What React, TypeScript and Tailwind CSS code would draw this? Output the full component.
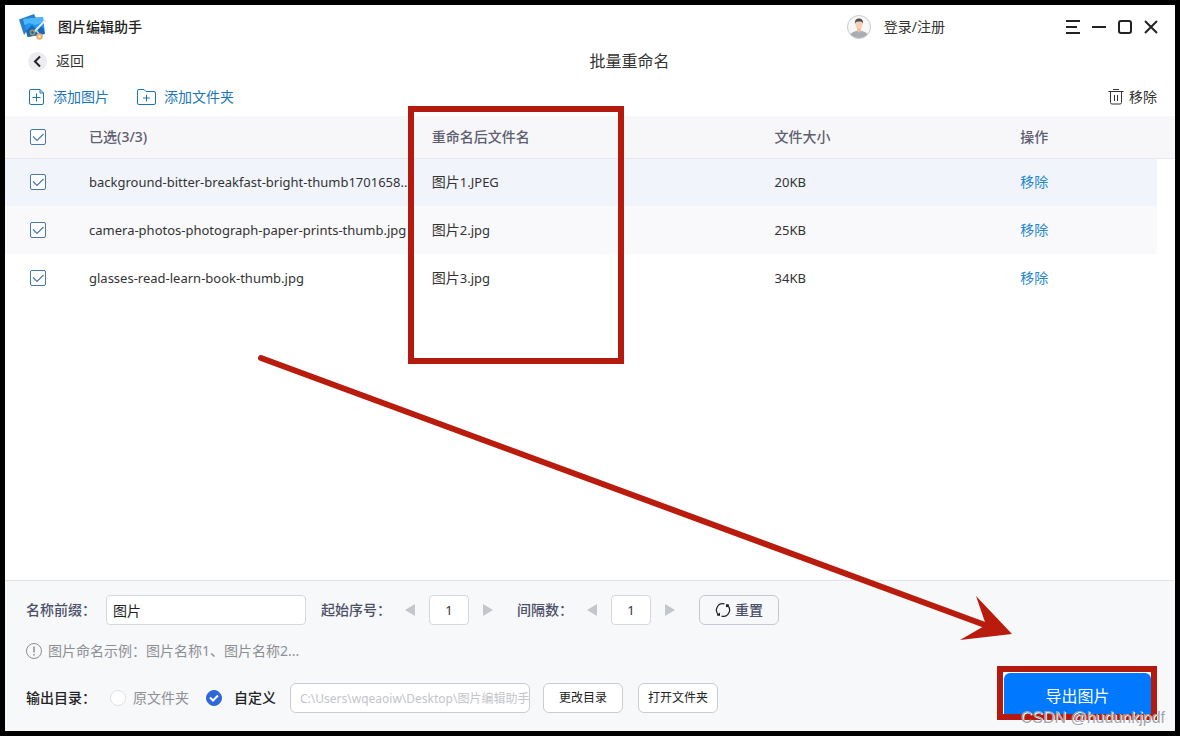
import React, { useState } from 'react';

type FileRow = {
  id: number;
  name: string;
  ext: string;
  size: string;
  rowClass: string;
};

const initialFiles: FileRow[] = [
  { id: 1, name: 'background-bitter-breakfast-bright-thumb1701658...', ext: '.JPEG', size: '20KB', rowClass: 'bg-[#f1f5fb]' },
  { id: 2, name: 'camera-photos-photograph-paper-prints-thumb.jpg', ext: '.jpg', size: '25KB', rowClass: 'bg-[#f9f9fb]' },
  { id: 3, name: 'glasses-read-learn-book-thumb.jpg', ext: '.jpg', size: '34KB', rowClass: 'bg-white' },
];

const Logo = () => (
  <svg className="h-[28px] w-[28px]" viewBox="0 0 28 28" aria-hidden="true">
    <path d="M0 6.500L15 1l2 4-12 17z" fill="#2b7fc4" />
    <path d="M4 6l20-2 2 17-17 3z" fill="#2196f0" />
    <path d="M4 6l20-2 .5 5-8 3-6-2-5 2z" fill="#4db5fa" />
    <path d="M7 18l6-6 5 5 4-4 3 3 .5 5-17 3z" fill="#1668b8" />
    <path d="M26.500 7L15 19" stroke="#dfe9f2" strokeWidth="2" />
    <path d="M17 17l3 4" stroke="#c3d2de" strokeWidth="1.500" />
    <circle cx="13.500" cy="19.500" r="2.200" fill="none" stroke="#a99258" strokeWidth="1.500" />
    <circle cx="20.500" cy="23.500" r="2.200" fill="none" stroke="#f0a860" strokeWidth="2" />
  </svg>
);

const Avatar = () => (
  <svg className="h-6 w-6" viewBox="0 0 24 24" aria-hidden="true">
    <defs>
      <clipPath id="avatar-clip">
        <circle cx="12" cy="12" r="11" />
      </clipPath>
    </defs>
    <circle cx="12" cy="12" r="11.500" fill="#f7f7f8" stroke="#c9c9cf" />
    <g clipPath="url(#avatar-clip)">
      <path d="M2 24c0-5 3-7 7-8h6c4 1 7 3 7 8z" fill="#a9adb2" />
      <path d="M10 12h4v4l-2 2-2-2z" fill="#f0bfa0" />
      <ellipse cx="12" cy="9.500" rx="3.500" ry="4.500" fill="#f8cfb4" />
      <path d="M8 9c-.5-4 1.500-5.500 4-5.500s4.500 1.500 4 5.500c-.5-2-1.500-2.500-4-2.500S8.500 7 8 9z" fill="#4d4d50" />
    </g>
  </svg>
);

const CheckBox = ({ label, checked, onChange }: { label: string; checked: boolean; onChange: () => void }) => (
  <label className="grid h-4 w-4">
    <input
      type="checkbox"
      aria-label={label}
      checked={checked}
      onChange={onChange}
      className="peer col-start-1 row-start-1 h-4 w-4 appearance-none rounded-xs border border-[#4a78ab] bg-white"
    />
    <svg className="pointer-events-none invisible col-start-1 row-start-1 h-4 w-4 peer-checked:visible" viewBox="0 0 16 16" fill="none" stroke="#4a78ab" strokeWidth="1.200">
      <path d="M3 7.500l4 4L13.500 5" />
    </svg>
  </label>
);

const Stepper = ({ id, value, onChange }: { id: string; value: number; onChange: (value: number) => void }) => (
  <div className="flex items-center gap-[14px]">
    <button type="button" aria-label="减少" onClick={() => onChange(Math.max(1, value - 1))}>
      <svg className="h-3 w-[10px]" viewBox="0 0 10 12" fill="#c3c6ca">
        <path d="M10 0v12L0 6z" />
      </svg>
    </button>
    <input
      id={id}
      type="text"
      value={value}
      onChange={(e) => onChange(Number(e.target.value) || 1)}
      className="h-[30px] w-10 rounded-sm border border-[#d5d8dd] bg-white text-center text-[13px] font-normal text-[#333]"
    />
    <button type="button" aria-label="增加" onClick={() => onChange(value + 1)}>
      <svg className="h-3 w-[10px]" viewBox="0 0 10 12" fill="#c3c6ca">
        <path d="M0 0v12l10-6z" />
      </svg>
    </button>
  </div>
);

const App = () => {
  const [files, setFiles] = useState(initialFiles);
  const [selected, setSelected] = useState<number[]>([1, 2, 3]);
  const [prefix, setPrefix] = useState('图片');
  const [start, setStart] = useState(1);
  const [step, setStep] = useState(1);
  const [output, setOutput] = useState('custom');

  const allSelected = selected.length === files.length;

  const toggle = (id: number) => {
    setSelected(selected.includes(id) ? selected.filter((s) => s !== id) : [...selected, id]);
  };

  const removeFiles = (ids: number[]) => {
    setFiles(files.filter((f) => !ids.includes(f.id)));
    setSelected(selected.filter((s) => !ids.includes(s)));
  };

  const reset = () => {
    setPrefix('图片');
    setStart(1);
    setStep(1);
  };

  return (
    <div className="flex min-h-screen bg-black p-[5px] font-['Noto_Sans','Noto_Sans_CJK_SC',sans-serif] text-sm text-[#333]">
      <div className="relative flex min-w-0 flex-1 flex-col bg-white">
        {/* title bar */}
        <header className="flex h-[43px] items-center pr-4 pl-[14px]">
          <Logo />
          <h1 className="ml-[11px] font-medium text-[#222]">图片编辑助手</h1>
          <button type="button" className="mr-[120px] ml-auto flex items-center gap-[13px]">
            <Avatar />
            登录/注册
          </button>
          <div className="flex items-center gap-[10px] text-[#222]">
            <button type="button" aria-label="菜单">
              <svg className="h-4 w-4" viewBox="0 0 16 16" fill="none" stroke="currentColor" strokeWidth="2">
                <path d="M1 2h14M1 8h11M1 14h14" />
              </svg>
            </button>
            <button type="button" aria-label="最小化">
              <svg className="h-4 w-4" viewBox="0 0 16 16" fill="none" stroke="currentColor" strokeWidth="2">
                <path d="M1 8h14" />
              </svg>
            </button>
            <button type="button" aria-label="最大化">
              <svg className="h-4 w-4" viewBox="0 0 16 16" fill="none" stroke="currentColor" strokeWidth="2">
                <rect x="2" y="2" width="12" height="12" rx="2" />
              </svg>
            </button>
            <button type="button" aria-label="关闭">
              <svg className="h-4 w-4" viewBox="0 0 16 16" fill="none" stroke="currentColor" strokeWidth="2">
                <path d="M2 2l12 12M14 2L2 14" />
              </svg>
            </button>
          </div>
        </header>

        <div className="flex h-[26px] items-center pl-[23px]">
          <button type="button" className="flex items-center gap-[9px]">
            <svg className="h-[19px] w-[19px]" viewBox="0 0 19 19" fill="none">
              <circle cx="9.500" cy="9.500" r="9.500" fill="#ebebf0" />
              <path d="M12 4.500l-5 5 5 5" stroke="#222" strokeWidth="2" />
            </svg>
            返回
          </button>
          <h2 className="flex-1 text-center text-base">批量重命名</h2>
        </div>

        {/* toolbar */}
        <div className="flex h-[42px] items-center gap-7 pt-1 pr-[18px] pl-6 text-[#1a76b8]">
          <button type="button" className="flex items-center gap-2">
            <svg className="h-4 w-4" viewBox="0 0 16 16" fill="none" stroke="currentColor">
              <path d="M11 .5H2A1.500 1.500 0 0 0 .5 2v12A1.500 1.500 0 0 0 2 15.500h11a1.500 1.500 0 0 0 1.500-1.500V4zM11 .5V4h3.500M7.500 4.500v8M3.500 8.500h8" />
            </svg>
            添加图片
          </button>
          <button type="button" className="flex items-center gap-2">
            <svg className="h-4 w-[19px]" viewBox="0 0 19 16" fill="none" stroke="currentColor">
              <path d="M2 .5h5l2 2h8A1.500 1.500 0 0 1 18.500 4v10a1.500 1.500 0 0 1-1.500 1.500H2A1.500 1.500 0 0 1 .5 14V2A1.500 1.500 0 0 1 2 .5zM9.500 5.500v7M6 9h7" />
            </svg>
            添加文件夹
          </button>
          <button type="button" className="ml-auto flex items-center gap-[5px] text-[#333]" onClick={() => removeFiles(selected)}>
            <svg className="h-4 w-4" viewBox="0 0 16 16" fill="none" stroke="currentColor">
              <path d="M5 .5h6M.5 2.500h15M2.500 2.500v11a1.500 1.500 0 0 0 1.500 1.500h8a1.500 1.500 0 0 0 1.500-1.500v-11M6.500 6v6M9.500 6v6" />
            </svg>
            移除
          </button>
        </div>

        {/* file list */}
        <main className="flex-1">
          <table className="w-full table-fixed border-collapse text-left">
            <colgroup>
              <col className="w-[84px]" />
              <col className="w-[29.3%]" />
              <col className="w-[29.3%]" />
              <col className="w-[21%]" />
              <col />
              <col className="w-[18px]" />
            </colgroup>
            <thead>
              <tr className="h-[42px] border-b border-[#e6e8ee] bg-[#f7f7f9] text-[#5e5e72]">
                <th className="pl-[25px]">
                  <CheckBox label="全选" checked={allSelected} onChange={() => setSelected(allSelected ? [] : files.map((f) => f.id))} />
                </th>
                <th className="font-medium">
                  已选({selected.length}/{files.length})
                </th>
                <th className="font-medium">重命名后文件名</th>
                <th className="font-medium">文件大小</th>
                <th className="font-medium">操作</th>
                <th></th>
              </tr>
            </thead>
            <tbody className="text-[13px]">
              {files.map((file, index) => (
                <tr key={file.id} className="h-12">
                  <td className={`pl-[25px] ${file.rowClass}`}>
                    <CheckBox label={file.name} checked={selected.includes(file.id)} onChange={() => toggle(file.id)} />
                  </td>
                  <td className={`overflow-hidden pr-2 whitespace-nowrap ${file.rowClass}`}>{file.name}</td>
                  <td className={file.rowClass}>
                    <span className="text-sm">{prefix}</span>
                    {start + index * step}
                    {file.ext}
                  </td>
                  <td className={file.rowClass}>{file.size}</td>
                  <td className={file.rowClass}>
                    <button type="button" className="text-sm text-[#2488cf]" onClick={() => removeFiles([file.id])}>
                      移除
                    </button>
                  </td>
                  <td></td>
                </tr>
              ))}
            </tbody>
          </table>
        </main>

        {/* rename and output settings */}
        <footer className="flex items-end justify-between border-t border-[#e1e3e7] bg-[#f7f8fa] pr-[18px] pl-[21px]">
          <div className="pt-[14px] pb-[18px]">
            <div className="flex items-center font-medium text-[#4b5068]">
              <label htmlFor="prefix">名称前缀：</label>
              <input
                id="prefix"
                type="text"
                value={prefix}
                onChange={(e) => setPrefix(e.target.value)}
                className="mr-[15px] ml-[10px] h-[30px] w-[200px] rounded-sm border border-[#d5d8dd] bg-white px-[6px] font-normal text-[#222]"
              />
              <label htmlFor="start" className="mr-[14px]">起始序号：</label>
              <Stepper id="start" value={start} onChange={setStart} />
              <label htmlFor="step" className="mr-[14px] ml-6">间隔数：</label>
              <Stepper id="step" value={step} onChange={setStep} />
              <button
                type="button"
                onClick={reset}
                className="ml-6 flex h-[30px] w-20 items-center justify-center gap-1 rounded-md border border-[#c5c8ce]"
              >
                <svg className="h-4 w-4" viewBox="0 0 16 16" fill="none" stroke="#222" strokeWidth="1.200">
                  <path d="M4 13A6.300 6.300 0 0 1 9.500 1.900M12 3A6.300 6.300 0 0 1 6.500 14.100M2 12.800l2.300.4.200-2.300M14 3.200l-2.300-.4-.2 2.300" />
                </svg>
                重置
              </button>
            </div>

            <p className="mt-[11px] mb-[17px] flex h-[30px] items-center gap-[6px] text-[#8d8f94]">
              <svg className="h-4 w-4" viewBox="0 0 16 16" fill="none" stroke="currentColor">
                <circle cx="8" cy="8" r="7.500" />
                <path d="M8 3.500v6M8 11v1.500" strokeWidth="1.500" />
              </svg>
              <span>图片命名示例：图片名称1、图片名称2...</span>
            </p>

            <div className="flex items-center">
              <span className="mr-[14px] font-medium text-[#222]">输出目录：</span>
              <label className="mr-[17px] flex items-center gap-[7px] text-[#8d8f94]">
                <input
                  type="radio"
                  name="output"
                  checked={output === 'source'}
                  onChange={() => setOutput('source')}
                  className="h-4 w-4 appearance-none rounded-full border border-[#dfe1e5] bg-white checked:bg-[#2f66da]"
                />
                原文件夹
              </label>
              <label className="mr-[14px] grid grid-cols-[16px_auto] items-center gap-x-3 font-medium text-[#222]">
                <input
                  type="radio"
                  name="output"
                  checked={output === 'custom'}
                  onChange={() => setOutput('custom')}
                  className="col-start-1 row-start-1 h-4 w-4 appearance-none rounded-full border border-[#dfe1e5] bg-white checked:border-[#2f66da] checked:bg-[#2f66da]"
                />
                <svg className="pointer-events-none col-start-1 row-start-1 h-4 w-4" viewBox="0 0 16 16" fill="none" stroke="#fff" strokeWidth="2">
                  <path d="M4 7.500l3 3 5-5" />
                </svg>
                <span className="row-start-1">自定义</span>
              </label>
              <input
                type="text"
                aria-label="输出目录"
                readOnly
                value="C:\Users\wqeaoiw\Desktop\图片编辑助手"
                className="h-[30px] w-60 rounded-md border border-[#c9ccd1] bg-white pl-[9px] text-xs text-[#c3c5c9]"
              />
              <button type="button" className="ml-[13px] h-[30px] w-20 rounded-md border border-[#c9ccd1] bg-white text-xs text-[#222]">
                更改目录
              </button>
              <button type="button" className="ml-[15px] h-[30px] w-20 rounded-md border border-[#c9ccd1] bg-white text-xs text-[#222]">
                打开文件夹
              </button>
            </div>
          </div>

          <div className="mb-[11px] h-[54px] w-40 border-6 border-[#b41a0e] bg-white pt-px pl-px">
            <button type="button" className="h-full w-full rounded-t-md bg-[#0078ff] pt-1 text-base text-white">
              导出图片
            </button>
          </div>
        </footer>

        {/* highlight box and arrow drawn over the window */}
        <div className="pointer-events-none absolute top-[101px] left-[403px] h-[258px] w-[216px] border-6 border-[#b41a0e]"></div>
        <svg className="pointer-events-none absolute top-[345px] left-[250px] h-[300px] w-[760px]" viewBox="255 350 760 300">
          <path d="M261 358L985 625" stroke="#b91b0c" strokeWidth="6" strokeLinecap="round" />
          <path d="M1012 634L976 596 986 625 960 640z" fill="#b91b0c" />
        </svg>
        <span className="absolute right-[10px] bottom-[3px] font-['Liberation_Sans',sans-serif] text-base leading-5 text-[#a3a5aa] [text-shadow:1px_1px_0_#fff]">
          CSDN @hudunkjpdf
        </span>
      </div>
    </div>
  );
};

export default App;
